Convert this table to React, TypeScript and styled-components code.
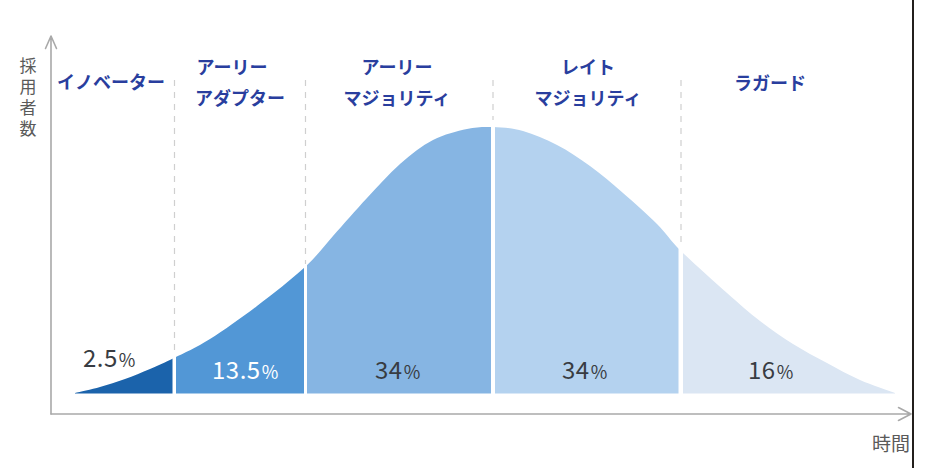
import React from "react";
import styled, { createGlobalStyle } from "styled-components";

const GlobalStyle = createGlobalStyle`
  html, body { margin: 0; padding: 0; background: #ffffff; }
  body { font-family: "Noto Sans CJK JP", "Noto Sans", sans-serif; }
`;

const Page = styled.div`
  display: flex;
  width: 937px;
  height: 468px;
  background: #ffffff;
  overflow: hidden;
`;

const ChartPanel = styled.div`
  flex: 0 0 912px;
  height: 468px;
  border-right: 2px solid #231f1c;
`;

const ChartSvg = styled.svg`
  display: block;
  width: 912px;
  height: 468px;
`;

const AxisLine = styled.path`
  fill: none;
  stroke: #a9a9a9;
  stroke-width: 1.6;
  stroke-linecap: round;
  stroke-linejoin: round;
`;

const GuideLine = styled.line`
  stroke: #cfcfcf;
  stroke-width: 1.2;
  stroke-dasharray: 6 6;
`;

const Segment = styled.rect<{ $color: string }>`
  fill: ${(p) => p.$color};
`;

const CategoryLabel = styled.text`
  font-family: "Noto Sans CJK JP", "Noto Sans", sans-serif;
  font-weight: 700;
  font-size: 18px;
  fill: #293e9e;
  text-anchor: middle;
`;

const PercentLabel = styled.text<{ $light?: boolean }>`
  font-family: "Noto Sans CJK JP", "Noto Sans", sans-serif;
  font-weight: 400;
  font-size: 24px;
  letter-spacing: 0.5px;
  fill: ${(p) => (p.$light ? "#ffffff" : "#383c42")};
`;

const PercentSign = styled.tspan`
  font-size: 18px;
`;

const AxisLabel = styled.text<{ $vertical?: boolean }>`
  font-family: "Noto Sans CJK JP", "Noto Sans", sans-serif;
  font-weight: 400;
  font-size: ${(p) => (p.$vertical ? "17px" : "19px")};
  fill: #5a5a5a;
  writing-mode: ${(p) => (p.$vertical ? "vertical-rl" : "horizontal-tb")};
  letter-spacing: ${(p) => (p.$vertical ? "4px" : "0")};
`;

type Pt = [number, number];

const curvePoints: Pt[] = [
  [75, 393],
  [100, 387],
  [125, 379],
  [150, 369],
  [174, 358],
  [210, 339],
  [257, 306],
  [305, 267],
  [333, 236],
  [367, 198],
  [400, 164],
  [433, 140],
  [467, 129],
  [493, 127],
  [523, 131],
  [557, 145],
  [590, 166],
  [623, 193],
  [657, 224],
  [681, 251],
  [727, 293],
  [760, 321],
  [793, 344],
  [827, 363],
  [860, 380],
  [895, 393],
];

function smoothPath(pts: Pt[]): string {
  let d = `M${pts[0][0]},${pts[0][1]}`;
  for (let i = 0; i < pts.length - 1; i++) {
    const p0 = pts[i - 1] || pts[i];
    const p1 = pts[i];
    const p2 = pts[i + 1];
    const p3 = pts[i + 2] || p2;
    const c1x = p1[0] + (p2[0] - p0[0]) / 6;
    const c1y = p1[1] + (p2[1] - p0[1]) / 6;
    const c2x = p2[0] - (p3[0] - p1[0]) / 6;
    const c2y = p2[1] - (p3[1] - p1[1]) / 6;
    d += ` C${c1x.toFixed(1)},${c1y.toFixed(1)} ${c2x.toFixed(1)},${c2y.toFixed(1)} ${p2[0]},${p2[1]}`;
  }
  d += " L895,393.5 L75,393.5 Z";
  return d;
}

const segments = [
  { x0: 70, x1: 172.5, color: "#1b63ab" },
  { x0: 176, x1: 304, color: "#5297d6" },
  { x0: 307, x1: 491, color: "#86b5e3" },
  { x0: 495, x1: 678.5, color: "#b4d2ef" },
  { x0: 683, x1: 900, color: "#dbe6f3" },
];

const guides = [
  { x: 174.5, y2: 355 },
  { x: 305.5, y2: 264 },
  { x: 493, y2: 120 },
  { x: 681, y2: 247 },
];

const percents = [
  { x: 83, y: 367, value: "2.5", light: false },
  { x: 212, y: 379, value: "13.5", light: true },
  { x: 375, y: 379, value: "34", light: false },
  { x: 562, y: 379, value: "34", light: false },
  { x: 748, y: 379, value: "16", light: false },
];

const categories = [
  { x: 111, lines: [{ y: 89, t: "イノベーター" }] },
  {
    x: 240,
    lines: [
      { y: 74, t: "アーリー", dx: -8 },
      { y: 105, t: "アダプター" },
    ],
  },
  {
    x: 397,
    lines: [
      { y: 74, t: "アーリー" },
      { y: 105, t: "マジョリティ" },
    ],
  },
  {
    x: 588,
    lines: [
      { y: 74, t: "レイト" },
      { y: 105, t: "マジョリティ" },
    ],
  },
  { x: 770, lines: [{ y: 90, t: "ラガード" }] },
];

export default function App() {
  const bell = smoothPath(curvePoints);
  return (
    <>
      <GlobalStyle />
      <Page>
        <ChartPanel>
          <ChartSvg viewBox="0 0 912 468">
            <defs>
              <clipPath id="bell-clip">
                <path d={bell} />
              </clipPath>
            </defs>

            {guides.map((g) => (
              <GuideLine key={g.x} x1={g.x} y1={80} x2={g.x} y2={g.y2} />
            ))}

            <g clipPath="url(#bell-clip)">
              {segments.map((s) => (
                <Segment
                  key={s.x0}
                  $color={s.color}
                  x={s.x0}
                  y={100}
                  width={s.x1 - s.x0}
                  height={300}
                />
              ))}
            </g>

            <AxisLine d="M51,414 L51,36 M45.5,48.5 L51,36 L56.5,48.5" />
            <AxisLine d="M51,414 L911,414 M898.5,407.5 L911,414 L898.5,420.5" />

            <AxisLabel $vertical x={28} y={57}>
              採用者数
            </AxisLabel>
            <AxisLabel x={872} y={451}>
              時間
            </AxisLabel>

            {categories.map((c) =>
              c.lines.map((l) => (
                <CategoryLabel key={c.x + l.t + l.y} x={c.x + (l.dx || 0)} y={l.y}>
                  {l.t}
                </CategoryLabel>
              ))
            )}

            {percents.map((p) => (
              <PercentLabel key={p.x} x={p.x} y={p.y} $light={p.light}>
                {p.value}
                <PercentSign dx={1}>%</PercentSign>
              </PercentLabel>
            ))}
          </ChartSvg>
        </ChartPanel>
      </Page>
    </>
  );
}
